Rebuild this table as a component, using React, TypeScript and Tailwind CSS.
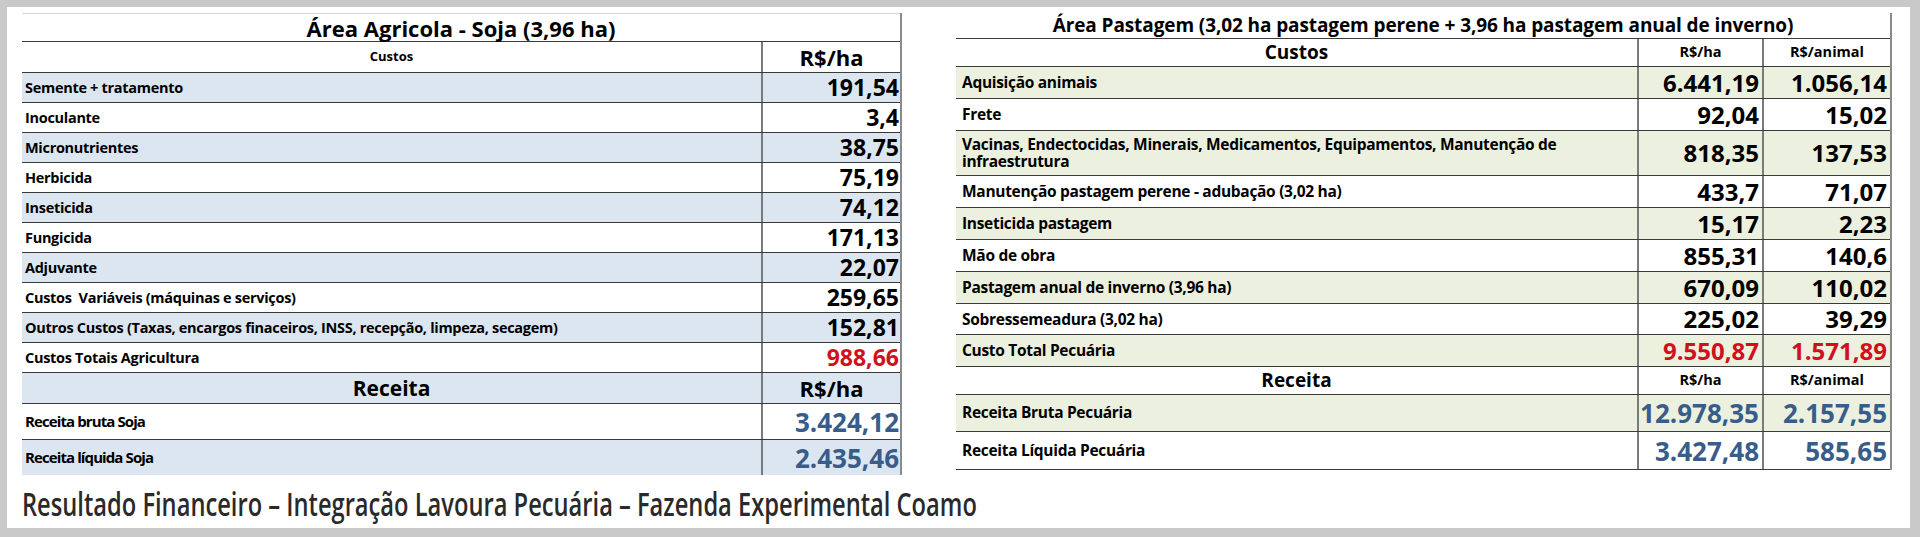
import React from "react";

type LRow = { label: string; value: string; color?: string };

const leftRows: LRow[] = [
  { label: "Semente + tratamento", value: "191,54" },
  { label: "Inoculante", value: "3,4" },
  { label: "Micronutrientes", value: "38,75" },
  { label: "Herbicida", value: "75,19" },
  { label: "Inseticida", value: "74,12" },
  { label: "Fungicida", value: "171,13" },
  { label: "Adjuvante", value: "22,07" },
  { label: "Custos  Variáveis (máquinas e serviços)", value: "259,65" },
  {
    label:
      "Outros Custos (Taxas, encargos finaceiros, INSS, recepção, limpeza, secagem)",
    value: "152,81",
  },
  { label: "Custos Totais Agricultura", value: "988,66", color: "red" },
];

type RRow = { label: React.ReactNode; ha: string; an: string; h: string; color?: string };

const rightRows: RRow[] = [
  { label: "Aquisição animais", ha: "6.441,19", an: "1.056,14", h: "h-[32px]" },
  { label: "Frete", ha: "92,04", an: "15,02", h: "h-[32px]" },
  {
    label: (
      <>
        Vacinas, Endectocidas, Minerais, Medicamentos, Equipamentos, Manutenção de
        <br />
        infraestrutura
      </>
    ),
    ha: "818,35",
    an: "137,53",
    h: "h-[45px]",
  },
  { label: "Manutenção pastagem perene - adubação (3,02 ha)", ha: "433,7", an: "71,07", h: "h-[32px]" },
  { label: "Inseticida pastagem", ha: "15,17", an: "2,23", h: "h-[32px]" },
  { label: "Mão de obra", ha: "855,31", an: "140,6", h: "h-[32px]" },
  { label: "Pastagem anual de inverno (3,96 ha)", ha: "670,09", an: "110,02", h: "h-[32px]" },
  { label: "Sobressemeadura (3,02 ha)", ha: "225,02", an: "39,29", h: "h-[31px]" },
  { label: "Custo Total Pecuária", ha: "9.550,87", an: "1.571,89", h: "h-[32px]", color: "red" },
];

const font = "font-['Open_Sans','Noto_Sans',sans-serif]";

function LeftTable() {
  return (
    <div className={`w-[880px] border-r-2 border-[#8a8a8a] ${font} font-bold text-black`}>
      <div className="h-[29px] border-t border-[#d6d6d6] border-b border-b-[#3a3a3a] flex items-center justify-center text-[22px] leading-none">
        Área Agricola - Soja (3,96 ha)
      </div>
      <div className="h-[31px] grid grid-cols-[739px_1fr] border-b border-[#3a3a3a]">
        <div className="flex items-center justify-center text-[13px]">Custos</div>
        <div className="flex items-center justify-center border-l-2 border-[#7a7a7a] text-[22px] leading-none">
          R$/ha
        </div>
      </div>
      {leftRows.map((r, i) => (
        <div
          key={i}
          className={`h-[30px] grid grid-cols-[739px_1fr] border-b border-[#3a3a3a] ${
            i % 2 === 0 ? "bg-[#dce6f1]" : "bg-white"
          }`}
        >
          <div className="min-w-0 overflow-hidden flex items-center pl-[3px] text-[14.5px] whitespace-pre tracking-[-0.3px]">
            {r.label}
          </div>
          <div
            className={`flex items-center justify-end pr-[1px] border-l-2 border-[#7a7a7a] text-[23px] leading-none ${
              r.color === "red" ? "text-[#d0101a]" : "text-black"
            }`}
          >
            {r.value}
          </div>
        </div>
      ))}
      <div className="h-[31px] grid grid-cols-[739px_1fr] border-b border-[#3a3a3a] bg-[#dce6f1]">
        <div className="flex items-center justify-center text-[21px] leading-none">Receita</div>
        <div className="flex items-center justify-center border-l-2 border-[#7a7a7a] text-[22px] leading-none">
          R$/ha
        </div>
      </div>
      <div className="h-[36px] grid grid-cols-[739px_1fr] border-b border-[#3a3a3a] bg-white">
        <div className="flex items-center pl-[3px] text-[15px] tracking-[-0.9px]">Receita bruta Soja</div>
        <div className="flex items-center justify-end pr-[1px] border-l-2 border-[#7a7a7a] text-[26px] leading-none text-[#385d8a]">
          3.424,12
        </div>
      </div>
      <div className="h-[35px] grid grid-cols-[739px_1fr] bg-[#dce6f1]">
        <div className="flex items-center pl-[3px] text-[15px] tracking-[-0.9px]">Receita líquida Soja</div>
        <div className="flex items-center justify-end pr-[1px] border-l-2 border-[#7a7a7a] text-[26px] leading-none text-[#385d8a]">
          2.435,46
        </div>
      </div>
    </div>
  );
}

function RightTable() {
  const cols = "grid grid-cols-[681px_125px_1fr]";
  return (
    <div className={`w-[936px] border-r-2 border-[#8a8a8a] ${font} font-bold text-black`}>
      <div className="h-[26px] border-b border-[#3a3a3a] flex items-center justify-center text-[19px] leading-none tracking-[-0.1px]">
        Área Pastagem (3,02 ha pastagem perene + 3,96 ha pastagem anual de inverno)
      </div>
      <div className={`h-[28px] ${cols} border-b border-[#3a3a3a]`}>
        <div className="flex items-center justify-center text-[19px] leading-none">Custos</div>
        <div className="flex items-center justify-center border-l-2 border-[#7a7a7a] text-[14.5px] leading-none">
          R$/ha
        </div>
        <div className="flex items-center justify-center border-l-2 border-[#7a7a7a] text-[14.5px] leading-none">
          R$/animal
        </div>
      </div>
      {rightRows.map((r, i) => {
        const c = r.color === "red" ? "text-[#d0101a]" : "text-black";
        return (
          <div
            key={i}
            className={`${r.h} ${cols} border-b border-[#3a3a3a] ${
              i % 2 === 0 ? "bg-[#ebf1de]" : "bg-white"
            }`}
          >
            <div className="min-w-0 flex items-center pl-[6px] text-[15.5px] leading-[17px] tracking-[-0.3px]">
              <div>{r.label}</div>
            </div>
            <div
              className={`flex items-center justify-end pr-[3px] border-l-2 border-[#7a7a7a] text-[24px] leading-none ${c}`}
            >
              {r.ha}
            </div>
            <div
              className={`flex items-center justify-end pr-[3px] border-l-2 border-[#7a7a7a] text-[24px] leading-none ${c}`}
            >
              {r.an}
            </div>
          </div>
        );
      })}
      <div className={`h-[28px] ${cols} border-b border-[#3a3a3a] bg-white`}>
        <div className="flex items-center justify-center text-[19px] leading-none">Receita</div>
        <div className="flex items-center justify-center border-l-2 border-[#7a7a7a] text-[14.5px] leading-none">
          R$/ha
        </div>
        <div className="flex items-center justify-center border-l-2 border-[#7a7a7a] text-[14.5px] leading-none">
          R$/animal
        </div>
      </div>
      <div className={`h-[37px] ${cols} border-b border-[#3a3a3a] bg-[#ebf1de]`}>
        <div className="flex items-center pl-[6px] text-[15.5px] tracking-[-0.3px]">Receita Bruta Pecuária</div>
        <div className="flex items-center justify-end pr-[3px] border-l-2 border-[#7a7a7a] text-[26px] leading-none text-[#385d8a]">
          12.978,35
        </div>
        <div className="flex items-center justify-end pr-[3px] border-l-2 border-[#7a7a7a] text-[26px] leading-none text-[#385d8a]">
          2.157,55
        </div>
      </div>
      <div className={`h-[38px] ${cols} border-b border-[#3a3a3a] bg-white`}>
        <div className="flex items-center pl-[6px] text-[15.5px] tracking-[-0.3px]">Receita Líquida Pecuária</div>
        <div className="flex items-center justify-end pr-[3px] border-l-2 border-[#7a7a7a] text-[26px] leading-none text-[#385d8a]">
          3.427,48
        </div>
        <div className="flex items-center justify-end pr-[3px] border-l-2 border-[#7a7a7a] text-[26px] leading-none text-[#385d8a]">
          585,65
        </div>
      </div>
    </div>
  );
}

export default function App() {
  return (
    <div className="w-[1920px] h-[537px] bg-[#c9c9c9] pt-[7px] pl-[7px] pr-[10px] pb-[9px] box-border">
      <div className="w-full h-full bg-white flex flex-col">
        <div className="flex items-start pt-[6px] pl-[15px]">
          <LeftTable />
          <div className="ml-[54px]">
            <RightTable />
          </div>
        </div>
        <div className="pl-[15px] mt-[9px] h-[40px] flex items-center">
          <div className="origin-left scale-x-[0.74] whitespace-nowrap text-[32px] leading-none font-semibold text-[#2a2a2a] font-['Open_Sans','Noto_Sans',sans-serif]">
            Resultado Financeiro – Integração Lavoura Pecuária – Fazenda Experimental Coamo
          </div>
        </div>
      </div>
    </div>
  );
}
